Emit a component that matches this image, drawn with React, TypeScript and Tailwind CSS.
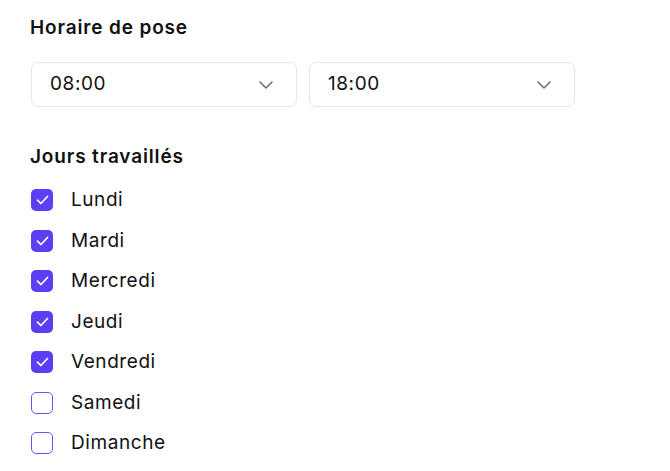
import React from "react";

const days = [
  { name: "Lundi", on: true },
  { name: "Mardi", on: true },
  { name: "Mercredi", on: true },
  { name: "Jeudi", on: true },
  { name: "Vendredi", on: true },
  { name: "Samedi", on: false },
  { name: "Dimanche", on: false },
];

function Chevron() {
  return (
    <svg width="14" height="8" viewBox="0 0 14 8" fill="none">
      <path d="M1 1l6 6 6-6" stroke="#6b6b70" strokeWidth="1.5" strokeLinecap="round" strokeLinejoin="round" />
    </svg>
  );
}

function Select({ value }: { value: string }) {
  return (
    <div className="flex h-[45px] w-[266px] items-center justify-between rounded-[7px] border border-[#e3e6ec] bg-white pl-[18px] pr-[23px]">
      <span className="text-[19px] tracking-[0.03em] text-[#111]">{value}</span>
      <Chevron />
    </div>
  );
}

export default function App() {
  return (
    <div
      className="min-h-[471px] w-[670px] bg-white pl-[30px] pt-[14px] text-[#111]"
      style={{ fontFamily: "Inter, 'Noto Sans', sans-serif" }}
    >
      <h2 className="text-[19px] font-semibold leading-[28px] tracking-[0.045em]">Horaire de pose</h2>
      <div className="mt-[20px] flex gap-[12px] pl-[1px]">
        <Select value="08:00" />
        <Select value="18:00" />
      </div>
      <h2 className="mt-[36px] text-[19px] font-semibold leading-[28px] tracking-[0.045em]">Jours travaillés</h2>
      <div className="mt-[17px] flex flex-col gap-[16.5px] pl-[1px]">
        {days.map((d) => (
          <div key={d.name} className="flex h-[24px] items-center">
            {d.on ? (
              <div className="flex h-[22px] w-[22px] items-center justify-center rounded-[5px] bg-[#5b3ff5]">
                <svg width="13" height="10" viewBox="0 0 13 10" fill="none">
                  <path d="M1.5 5.2l3.4 3.3L11.5 1.5" stroke="white" strokeWidth="1.7" strokeLinecap="round" strokeLinejoin="round" />
                </svg>
              </div>
            ) : (
              <div className="h-[22px] w-[22px] rounded-[5px] border-[1.5px] border-[#6a52f6] bg-white" />
            )}
            <span className="ml-[18px] text-[19px] leading-[24px] tracking-[0.03em]">{d.name}</span>
          </div>
        ))}
      </div>
    </div>
  );
}
